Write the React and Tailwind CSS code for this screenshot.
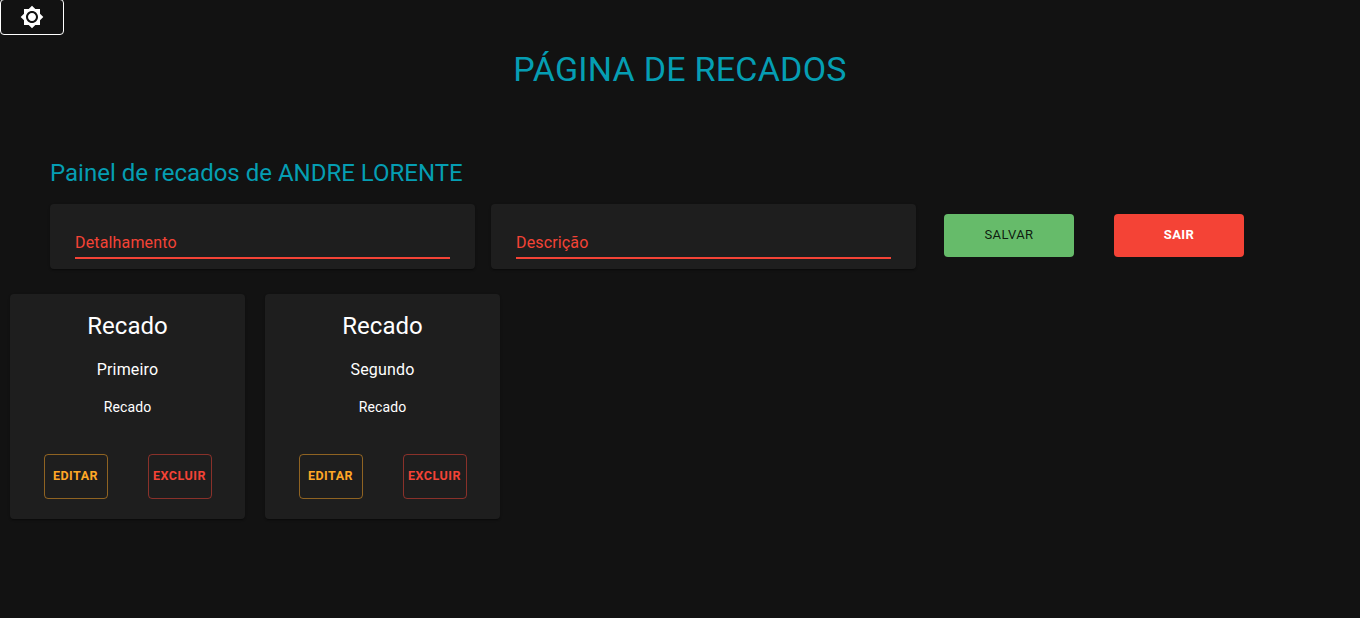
import { MdBrightness7 } from 'react-icons/md';

const notes = [
  { id: 1, title: 'Primeiro', text: 'Recado' },
  { id: 2, title: 'Segundo', text: 'Recado' },
];

const elevation = 'shadow-[0px_2px_1px_-1px_rgba(0,0,0,0.2),0px_1px_1px_0px_rgba(0,0,0,0.14),0px_1px_3px_0px_rgba(0,0,0,0.12)]';

function Field({ label }) {
  return (
    <div className={`h-[65px] w-[425px] rounded bg-[#1e1e1e] px-[25px] pt-[22px] ${elevation}`}>
      <div className="h-[33px] border-b-2 border-[#f44336] pt-[5px] text-base leading-6 tracking-[0.15px] text-[#f44336]">{label}</div>
    </div>
  );
}

function Note({ title, text }) {
  return (
    <article className={`flex h-[225px] w-[235px] flex-col items-center rounded bg-[#1e1e1e] text-white ${elevation}`}>
      <h3 className="mt-4 text-2xl leading-8">Recado</h3>
      <p className="mt-4 text-base leading-6 tracking-[0.15px]">{title}</p>
      <p className="mt-[14px] text-sm leading-[22px] tracking-[0.1px]">{text}</p>
      <div className="mt-9 flex gap-10">
        <button className="flex h-[45px] w-16 items-center justify-center rounded border border-[#ffa726]/50 pb-0.5 text-[12.5px] leading-[19px] font-bold tracking-[0.5px] text-[#ffa726]">EDITAR</button>
        <button className="flex h-[45px] w-16 items-center justify-center rounded border border-[#f44336]/50 pb-0.5 text-[12.5px] leading-[19px] font-bold tracking-[0.5px] text-[#f44336]">EXCLUIR</button>
      </div>
    </article>
  );
}

export default function App() {
  return (
    <main className="min-h-screen overflow-hidden bg-[#121212] font-['Roboto',sans-serif]">
      <button aria-label="Alternar tema" className="-mt-px flex h-9 w-16 items-center justify-center rounded border border-white text-white">
        <MdBrightness7 size={24} />
      </button>
      <h1 className="mt-[13px] h-[42px] text-center text-[34px] leading-[42px] tracking-[0.25px] text-[#059eb3]">PÁGINA DE RECADOS</h1>
      <h2 className="mt-[67px] ml-[50px] h-8 text-2xl leading-8 text-[#059eb3]">Painel de recados de ANDRE LORENTE</h2>
      <div className="mt-[15px] ml-[50px] flex">
        <Field label="Detalhamento" />
        <div className="ml-4"><Field label="Descrição" /></div>
        <button className="mt-[10px] ml-7 h-[43px] w-[130px] rounded bg-[#66bb6a] pb-0.5 text-[13px] tracking-[0.46px] text-black/87">SALVAR</button>
        <button className="mt-[10px] ml-10 h-[43px] w-[130px] rounded bg-[#f44336] pb-0.5 text-[13px] font-bold tracking-[0.4px] text-white">SAIR</button>
      </div>
      <section className="mt-[25px] ml-[10px] flex gap-5">
        {notes.map((note) => <Note key={note.id} {...note} />)}
      </section>
    </main>
  );
}
